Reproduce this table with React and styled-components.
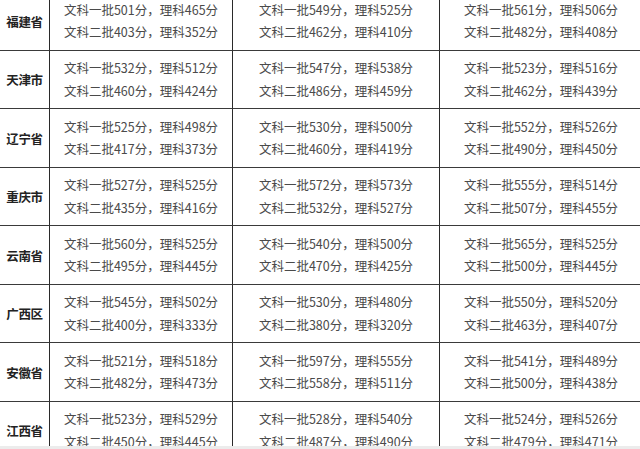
import React from 'react';
import styled, { createGlobalStyle } from 'styled-components';

const ROW_HEIGHT = 58.5;

const rows = [
  { name: '福建省', cols: [[501, 465, 403, 352], [549, 525, 462, 410], [561, 506, 482, 408]] },
  { name: '天津市', cols: [[532, 512, 460, 424], [547, 538, 486, 459], [523, 516, 462, 439]] },
  { name: '辽宁省', cols: [[525, 498, 417, 373], [530, 500, 460, 419], [552, 526, 490, 450]] },
  { name: '重庆市', cols: [[527, 525, 435, 416], [572, 573, 532, 527], [555, 514, 507, 455]] },
  { name: '云南省', cols: [[560, 525, 495, 445], [540, 500, 470, 425], [565, 525, 500, 445]] },
  { name: '广西区', cols: [[545, 502, 400, 333], [530, 480, 380, 320], [550, 520, 463, 407]] },
  { name: '安徽省', cols: [[521, 518, 482, 473], [597, 555, 558, 511], [541, 489, 500, 438]] },
  { name: '江西省', cols: [[523, 529, 450, 445], [528, 540, 487, 490], [524, 526, 479, 471]] },
];

const GlobalStyle = createGlobalStyle`
  html, body {
    margin: 0;
    padding: 0;
    background: #ececec;
  }
  body {
    font-family: "Noto Sans CJK SC", "Noto Sans", sans-serif;
  }
`;

const Viewport = styled.div`
  width: 640px;
  height: 446px;
  overflow: hidden;
  background: #fff;
`;

const Table = styled.div`
  display: grid;
  grid-template-columns: 50px 183px 207px 203px;
  grid-auto-rows: ${ROW_HEIGHT}px;
  margin-top: -8px;
`;

const Cell = styled.div`
  box-sizing: border-box;
  border-right: 1px solid #2a2a2a;
  border-bottom: 1.5px solid #3a3a3a;
  display: flex;
  flex-direction: column;
  align-items: center;
  justify-content: center;
  padding-top: 1px;
`;

const Province = styled(Cell)`
  font-size: 12.5px;
  font-weight: 700;
  color: #222;
  letter-spacing: -0.3px;
`;

const Line = styled.div`
  font-size: 12.5px;
  line-height: 22.5px;
  color: #4a4a4a;
  white-space: nowrap;
`;

export default function App() {
  return (
    <>
      <GlobalStyle />
      <Viewport>
        <Table>
          {rows.map((row) => (
            <React.Fragment key={row.name}>
              <Province>{row.name}</Province>
              {row.cols.map((c, i) => (
                <Cell key={i}>
                  <Line>文科一批{c[0]}分，理科{c[1]}分</Line>
                  <Line>文科二批{c[2]}分，理科{c[3]}分</Line>
                </Cell>
              ))}
            </React.Fragment>
          ))}
        </Table>
      </Viewport>
    </>
  );
}
